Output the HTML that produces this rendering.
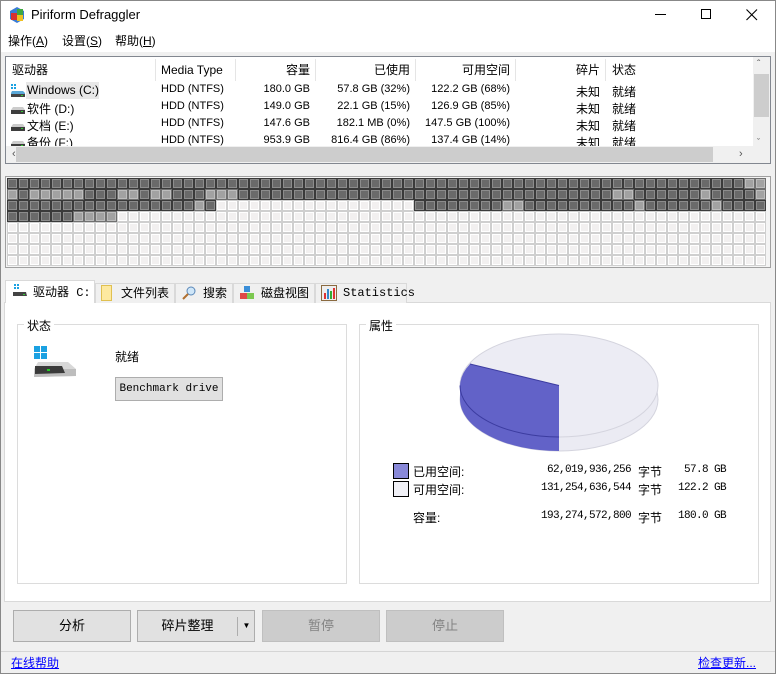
<!DOCTYPE html>
<html><head><meta charset="utf-8">
<style>
*{margin:0;padding:0;box-sizing:border-box}
body{width:776px;height:674px;overflow:hidden;background:#f0f0f0;font-family:"Liberation Sans","Noto Sans CJK SC",sans-serif;font-size:12px;color:#000;position:relative}
.a{position:absolute;white-space:nowrap}
.win{position:absolute;left:0;top:0;width:776px;height:674px;border:1px solid #888}
.mono{font-family:"Liberation Mono","Noto Sans CJK SC",monospace}
.hd{position:absolute;top:2px;height:22px;line-height:22px}
.sep{position:absolute;top:2px;width:1px;height:22px;background:#e5e5e5}
.r{text-align:right}
.cell{position:absolute;width:11px;height:11px;border:1px solid #bbb;}
.btn{position:absolute;top:610px;height:32px;border:1px solid #adadad;background:#e1e1e1;text-align:center;line-height:30px;font-size:13px}
.dis{background:#cccccc;border-color:#bfbfbf;color:#838383}
.tab{position:absolute;top:283px;height:20px;border:1px solid #d9d9d9;border-bottom:none;background:#f0f0f0;line-height:19px;font-size:12px}
.grp{position:absolute;border:1px solid #dcdcdc}
.gl{position:absolute;top:-8px;left:6px;background:#fff;padding:0 3px;font-size:12px}
</style></head><body>
<div class="a" style="left:0;top:0;width:776px;height:52px;background:#fff"></div>
<!-- logo -->
<svg class="a" style="left:8px;top:6px" width="18" height="18" viewBox="0 0 18 18">
<path d="M2 5 L9 1 L16 5 L16 13 L9 17 L2 13Z" fill="#3a7bd5"/>
<rect x="3" y="7" width="6" height="7" fill="#d93030"/>
<rect x="9" y="3" width="6" height="6" fill="#3fa83f"/>
<rect x="9" y="9" width="6" height="6" fill="#f0c020"/>
</svg>
<div class="a" style="left:31px;top:7px;font-size:13px">Piriform Defraggler</div>
<div class="a" style="left:655px;top:14px;width:11px;height:1px;background:#000"></div>
<div class="a" style="left:701px;top:9px;width:10px;height:10px;border:1px solid #000"></div>
<svg class="a" style="left:746px;top:9px" width="12" height="12"><path d="M0.5 0.5L11 11M11 0.5L0.5 11" stroke="#000" stroke-width="1.1"/></svg>
<div class="a" style="left:8px;top:32px;font-size:12px">操作(<u>A</u>)</div>
<div class="a" style="left:62px;top:32px;font-size:12px">设置(<u>S</u>)</div>
<div class="a" style="left:115px;top:32px;font-size:12px">帮助(<u>H</u>)</div>

<!-- list view -->
<div class="a" style="left:5px;top:56px;width:766px;height:108px;border:1px solid #828790;background:#fff;overflow:hidden">
 <div class="hd" style="left:6px">驱动器</div>
 <div class="sep" style="left:149px"></div>
 <div class="hd" style="left:155px">Media Type</div>
 <div class="sep" style="left:229px"></div>
 <div class="hd r" style="left:229px;width:75px">容量</div>
 <div class="sep" style="left:309px"></div>
 <div class="hd r" style="left:309px;width:95px">已使用</div>
 <div class="sep" style="left:409px"></div>
 <div class="hd r" style="left:409px;width:95px">可用空间</div>
 <div class="sep" style="left:509px"></div>
 <div class="hd r" style="left:509px;width:85px">碎片</div>
 <div class="sep" style="left:599px"></div>
 <div class="hd" style="left:606px">状态</div>
 <div class="a" style="left:20px;top:25px;width:73px;height:17px;background:#e8e8e8"></div>
 <div id="rows"></div>
 <div class="a" style="left:0;top:89px;width:747px;height:17px;background:#f0f0f0"></div>
 <div class="a" style="left:10px;top:90px;width:697px;height:15px;background:#cdcdcd"></div>
 <div class="a" style="left:6px;top:91px;font-size:11px;color:#555">&#8249;</div>
 <div class="a" style="left:733px;top:91px;font-size:11px;color:#555">&#8250;</div>
 <div class="a" style="left:747px;top:0;width:17px;height:106px;background:#f0f0f0"></div>
 <div class="a" style="left:748px;top:17px;width:15px;height:43px;background:#cdcdcd"></div>
 <div class="a" style="left:751px;top:2px;font-size:10px;color:#555">&#710;</div>
 <div class="a" style="left:751px;top:80px;font-size:9px;color:#555">&#711;</div>
</div>

<!-- block map -->
<div class="a" style="left:5px;top:176px;width:766px;height:92px;border:1px solid #a0a0a0;background:#f4f4f4"></div>
<div id="map"></div>

<!-- tabs -->
<div class="a" style="left:4px;top:302px;width:767px;height:300px;background:#fff;border:1px solid #d9d9d9"></div>
<div class="tab" style="left:5px;top:280px;width:90px;height:23px;background:#fff;">
 <svg class="a" style="left:6px;top:3px" width="16" height="14"><rect x="2" y="0" width="2" height="2" fill="#1ba1e2"/><rect x="5" y="0" width="2" height="2" fill="#1ba1e2"/><rect x="2" y="3" width="2" height="2" fill="#1ba1e2"/><rect x="5" y="3" width="2" height="2" fill="#1ba1e2"/><path d="M1 8 L14 8 L15 12 L1 12Z" fill="#444"/><rect x="11" y="10" width="2" height="1" fill="#3c3"/></svg>
 <span class="a mono" style="left:27px;top:3px">驱动器 C:</span></div>
<div class="tab" style="left:95px;width:80px"><svg class="a" style="left:5px;top:1px" width="12" height="16"><rect x="0.5" y="0.5" width="10" height="15" fill="#fde9a0" stroke="#e0c050"/></svg><span class="a" style="left:25px;top:0">文件列表</span></div>
<div class="tab" style="left:175px;width:58px"><svg class="a" style="left:5px;top:2px" width="16" height="14"><circle cx="10" cy="5" r="4" fill="#cfe6f8" stroke="#5a87b8"/><path d="M7 8 L2 13" stroke="#b07030" stroke-width="2"/></svg><span class="a" style="left:27px;top:0">搜索</span></div>
<div class="tab" style="left:233px;width:82px"><svg class="a" style="left:5px;top:1px" width="16" height="16"><rect x="5" y="1" width="6" height="6" fill="#3a8ed8"/><rect x="1" y="8" width="7" height="6" fill="#e04848"/><rect x="8" y="8" width="7" height="6" fill="#7cc850"/></svg><span class="a" style="left:27px;top:0">磁盘视图</span></div>
<div class="tab" style="left:315px;width:92px"><svg class="a" style="left:5px;top:1px" width="16" height="16"><rect x="0.5" y="0.5" width="15" height="15" fill="#eee" stroke="#8a6a40"/><rect x="3" y="8" width="2" height="6" fill="#d33"/><rect x="6" y="4" width="2" height="10" fill="#38c"/><rect x="9" y="6" width="2" height="8" fill="#3a3"/><rect x="12" y="3" width="2" height="11" fill="#d33"/></svg><span class="a mono" style="left:27px;top:0">Statistics</span></div>

<!-- status group -->
<div class="grp" style="left:17px;top:324px;width:330px;height:260px"><div class="gl">状态</div></div>
<svg class="a" style="left:32px;top:345px" width="46" height="36">
<rect x="2" y="1" width="6" height="6" fill="#1ba1e2"/><rect x="9" y="1" width="6" height="6" fill="#1ba1e2"/><rect x="2" y="8" width="6" height="6" fill="#1ba1e2"/><rect x="9" y="8" width="6" height="6" fill="#1ba1e2"/>
<path d="M6 17 L36 17 L44 24 L44 31 L2 32 L2 24Z" fill="#d8d8d8"/>
<path d="M3 24 L44 24 L44 31 L2 32Z" fill="#bdbdbd"/>
<path d="M3 21 L30 21 L33 28 L3 29Z" fill="#3a3a3a"/>
<rect x="15" y="24" width="3" height="2" fill="#2c2"/>
</svg>
<div class="a" style="left:115px;top:348px;font-size:12px">就绪</div>
<div class="a mono" style="left:115px;top:377px;width:108px;height:24px;border:1px solid #adadad;background:#e1e1e1;text-align:center;line-height:22px;font-size:11px">Benchmark drive</div>

<!-- property group -->
<div class="grp" style="left:359px;top:324px;width:400px;height:260px"><div class="gl">属性</div></div>
<svg class="a" style="left:455px;top:330px" width="210" height="128" viewBox="455 330 210 128">
<path d="M460 385.5 L460 399.5 A99 51.5 0 0 0 658 399.5 L658 385.5Z" fill="#ebebf3"/>
<ellipse cx="559" cy="399.5" rx="99" ry="51.5" fill="#ebebf3" stroke="#d4d4de"/>
<ellipse cx="559" cy="385.5" rx="99" ry="51.5" fill="#ececf4" stroke="#d4d4de"/>
<path d="M559 385.5 L470 364 A99 51.5 0 0 0 460 385.5 L460 399.5 A99 51.5 0 0 0 559 451 Z" fill="#6262c8"/>
<path d="M460 385.5 A99 51.5 0 0 0 559 437" fill="none" stroke="#3c3ca0"/>
<path d="M559 385.5 L470 364" stroke="#3c3ca0"/>
</svg>
<div class="a" style="left:393px;top:463px;width:16px;height:16px;border:1px solid #000;background:#8888d8"></div>
<div class="a" style="left:393px;top:481px;width:16px;height:16px;border:1px solid #000;background:#f0f0f6"></div>
<div class="a" style="left:413px;top:463px">已用空间:</div>
<div class="a" style="left:413px;top:481px">可用空间:</div>
<div class="a" style="left:413px;top:509px">容量:</div>
<div class="a mono r" style="left:500px;top:464px;width:131px;font-size:11px;letter-spacing:-0.6px">62,019,936,256</div>
<div class="a mono r" style="left:500px;top:482px;width:131px;font-size:11px;letter-spacing:-0.6px">131,254,636,544</div>
<div class="a mono r" style="left:500px;top:510px;width:131px;font-size:11px;letter-spacing:-0.6px">193,274,572,800</div>
<div class="a" style="left:638px;top:463px">字节</div>
<div class="a" style="left:638px;top:481px">字节</div>
<div class="a" style="left:638px;top:509px">字节</div>
<div class="a mono r" style="left:660px;top:464px;width:66px;font-size:11px;letter-spacing:-0.6px">57.8 GB</div>
<div class="a mono r" style="left:660px;top:482px;width:66px;font-size:11px;letter-spacing:-0.6px">122.2 GB</div>
<div class="a mono r" style="left:660px;top:510px;width:66px;font-size:11px;letter-spacing:-0.6px">180.0 GB</div>

<!-- buttons -->
<div class="btn" style="left:13px;width:118px">分析</div>
<div class="btn" style="left:137px;width:118px"><span class="a" style="left:0;width:99px;text-align:center">碎片整理</span><div class="a" style="left:99px;top:6px;width:1px;height:19px;background:#adadad"></div><div class="a" style="left:100px;top:0;width:17px;font-size:8px">&#9660;</div></div>
<div class="btn dis" style="left:262px;width:118px">暂停</div>
<div class="btn dis" style="left:386px;width:118px">停止</div>
<div class="a" style="left:1px;top:651px;width:774px;height:1px;background:#d5d5d5"></div>
<div class="a" style="left:11px;top:654px;color:#0000ff;text-decoration:underline">在线帮助</div>
<div class="a" style="left:698px;top:654px;color:#0000ff;text-decoration:underline">检查更新...</div>
<div class="win"></div>

<script>
var rows=[["Windows (C:)","180.0 GB","57.8 GB (32%)","122.2 GB (68%)",1],["软件 (D:)","149.0 GB","22.1 GB (15%)","126.9 GB (85%)",0],["文档 (E:)","147.6 GB","182.1 MB (0%)","147.5 GB (100%)",0],["备份 (F:)","953.9 GB","816.4 GB (86%)","137.4 GB (14%)",0]];
var h="";
rows.forEach(function(r,i){var t=26+i*17;
 if(r[4]) h+='<svg class="a" style="left:4px;top:'+(t+1)+'px" width="16" height="14"><rect x="1" y="0" width="2" height="2" fill="#1ba1e2"/><rect x="4" y="0" width="2" height="2" fill="#1ba1e2"/><rect x="1" y="3" width="2" height="2" fill="#1ba1e2"/><rect x="4" y="3" width="2" height="2" fill="#1ba1e2"/><path d="M2 7 L13 7 L15 9 L15 13 L1 13 L1 9Z" fill="#5aa8d8"/><rect x="1" y="10" width="14" height="3" fill="#444"/><rect x="11" y="11" width="2" height="1" fill="#3c3"/></svg>';
 else h+='<svg class="a" style="left:4px;top:'+(t+1)+'px" width="16" height="14"><path d="M3 6 L13 6 L15 9 L15 13 L1 13 L1 9Z" fill="#ccc"/><rect x="1" y="9" width="14" height="4" fill="#3d3d3d"/><rect x="11" y="10" width="2" height="1" fill="#3c3"/></svg>';
 h+='<div class="a" style="left:21px;top:'+t+'px">'+r[0]+'</div>';
 h+='<div class="a" style="left:155px;top:'+t+'px;font-size:11px">HDD (NTFS)</div>';
 h+='<div class="a r" style="left:229px;width:75px;top:'+t+'px;font-size:11px">'+r[1]+'</div>';
 h+='<div class="a r" style="left:309px;width:95px;top:'+t+'px;font-size:11px">'+r[2]+'</div>';
 h+='<div class="a r" style="left:409px;width:95px;top:'+t+'px;font-size:11px">'+r[3]+'</div>';
 h+='<div class="a r" style="left:509px;width:85px;top:'+t+'px">未知</div>';
 h+='<div class="a" style="left:606px;top:'+t+'px">就绪</div>';
});
document.getElementById("rows").innerHTML=h;
var N=69,m="";
function typ(r,c){
 if(r==0) return (c>=67)?"m":"d";
 if(r==1){ if([0,2,3,4,5,6,10,11,13,14,18,19,20,55,56,63,68].indexOf(c)>=0) return "m"; return "d";}
 if(r==2){ if(c<=16||c==18) return "d"; if(c==17) return "m"; if(c<=36) return "l"; if([45,46,57,64].indexOf(c)>=0) return "m"; return "d";}
 if(r==3){ if(c<=5) return "d"; if(c<=9) return "m"; return "l";}
 return "l";
}
var st={d:"background:#6a6a6a;border-color:#3a3a3a;box-shadow:inset 0 0 0 1px #8c8c8c",m:"background:#a2a2a2;border-color:#707070;box-shadow:inset 0 0 0 1px #bdbdbd",l:"background:#f2f0f0;border-color:#cfcfcf;box-shadow:inset 0 0 0 1px #fff"};
for(var r=0;r<8;r++)for(var c=0;c<N;c++){
 m+='<div class="cell" style="left:'+(7+c*11)+'px;top:'+(178+r*11)+'px;'+st[typ(r,c)]+'"></div>';
}
document.getElementById("map").innerHTML=m;
</script>
</body></html>
